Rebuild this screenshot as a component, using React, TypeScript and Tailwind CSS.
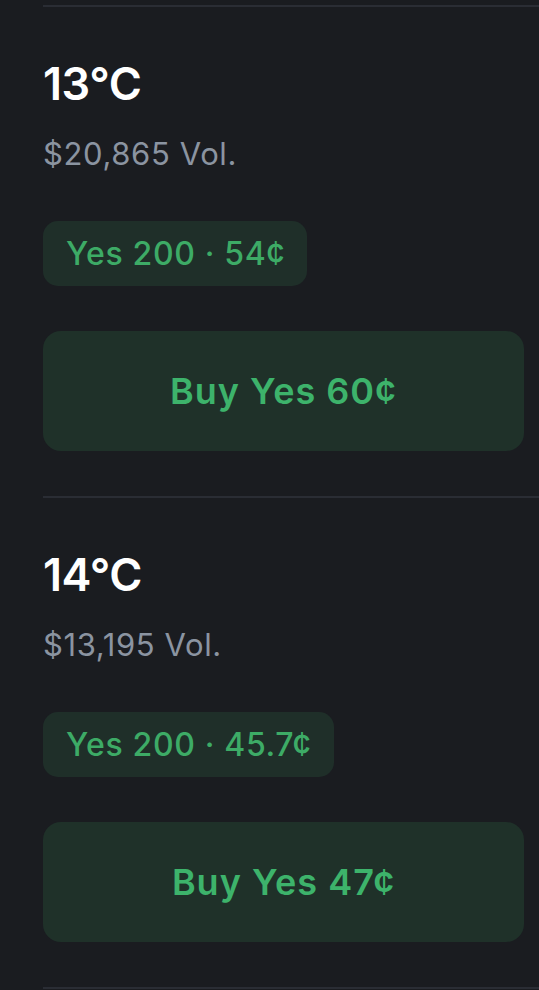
import React from "react";

type Item = { title: string; vol: string; pill: string; buy: string };

const items: Item[] = [
  { title: "13°C", vol: "$20,865 Vol.", pill: "Yes 200 · 54¢", buy: "Buy Yes 60¢" },
  { title: "14°C", vol: "$13,195 Vol.", pill: "Yes 200 · 45.7¢", buy: "Buy Yes 47¢" },
];

function Row({ item }: { item: Item }) {
  return (
    <div className="border-t-2 border-[#2a2d34] pr-[15px] pb-[45px]">
      <div className="mt-[54px] text-[45px] leading-none font-semibold text-white tracking-[-0.01em]">
        {item.title}
      </div>
      <div className="mt-[32px] text-[31px] leading-none text-[#8b94a1] tracking-[0.02em]">{item.vol}</div>
      <div className="mt-[52px] flex">
        <div className="h-[65px] flex items-center rounded-[15px] bg-[#1f2f29] pl-[23px] pr-[22px] text-[32px] font-medium text-[#3dab66] tracking-[0.02em]">
          {item.pill}
        </div>
      </div>
      <div className="mt-[45px] h-[120px] w-full rounded-[18px] bg-[#1f3129] flex items-center justify-center text-[36px] font-semibold text-[#3db36b] tracking-[0.028em]">
        {item.buy}
      </div>
    </div>
  );
}

export default function App() {
  return (
    <div
      className="min-h-[990px] w-[539px] bg-[#1a1c20] pt-[5px] pl-[43px] overflow-hidden"
      style={{ fontFamily: "Inter, 'Noto Sans', sans-serif" }}
    >
      {items.map((it) => (
        <Row key={it.title} item={it} />
      ))}
      <div className="border-t-2 border-[#2a2d34]" />
    </div>
  );
}
